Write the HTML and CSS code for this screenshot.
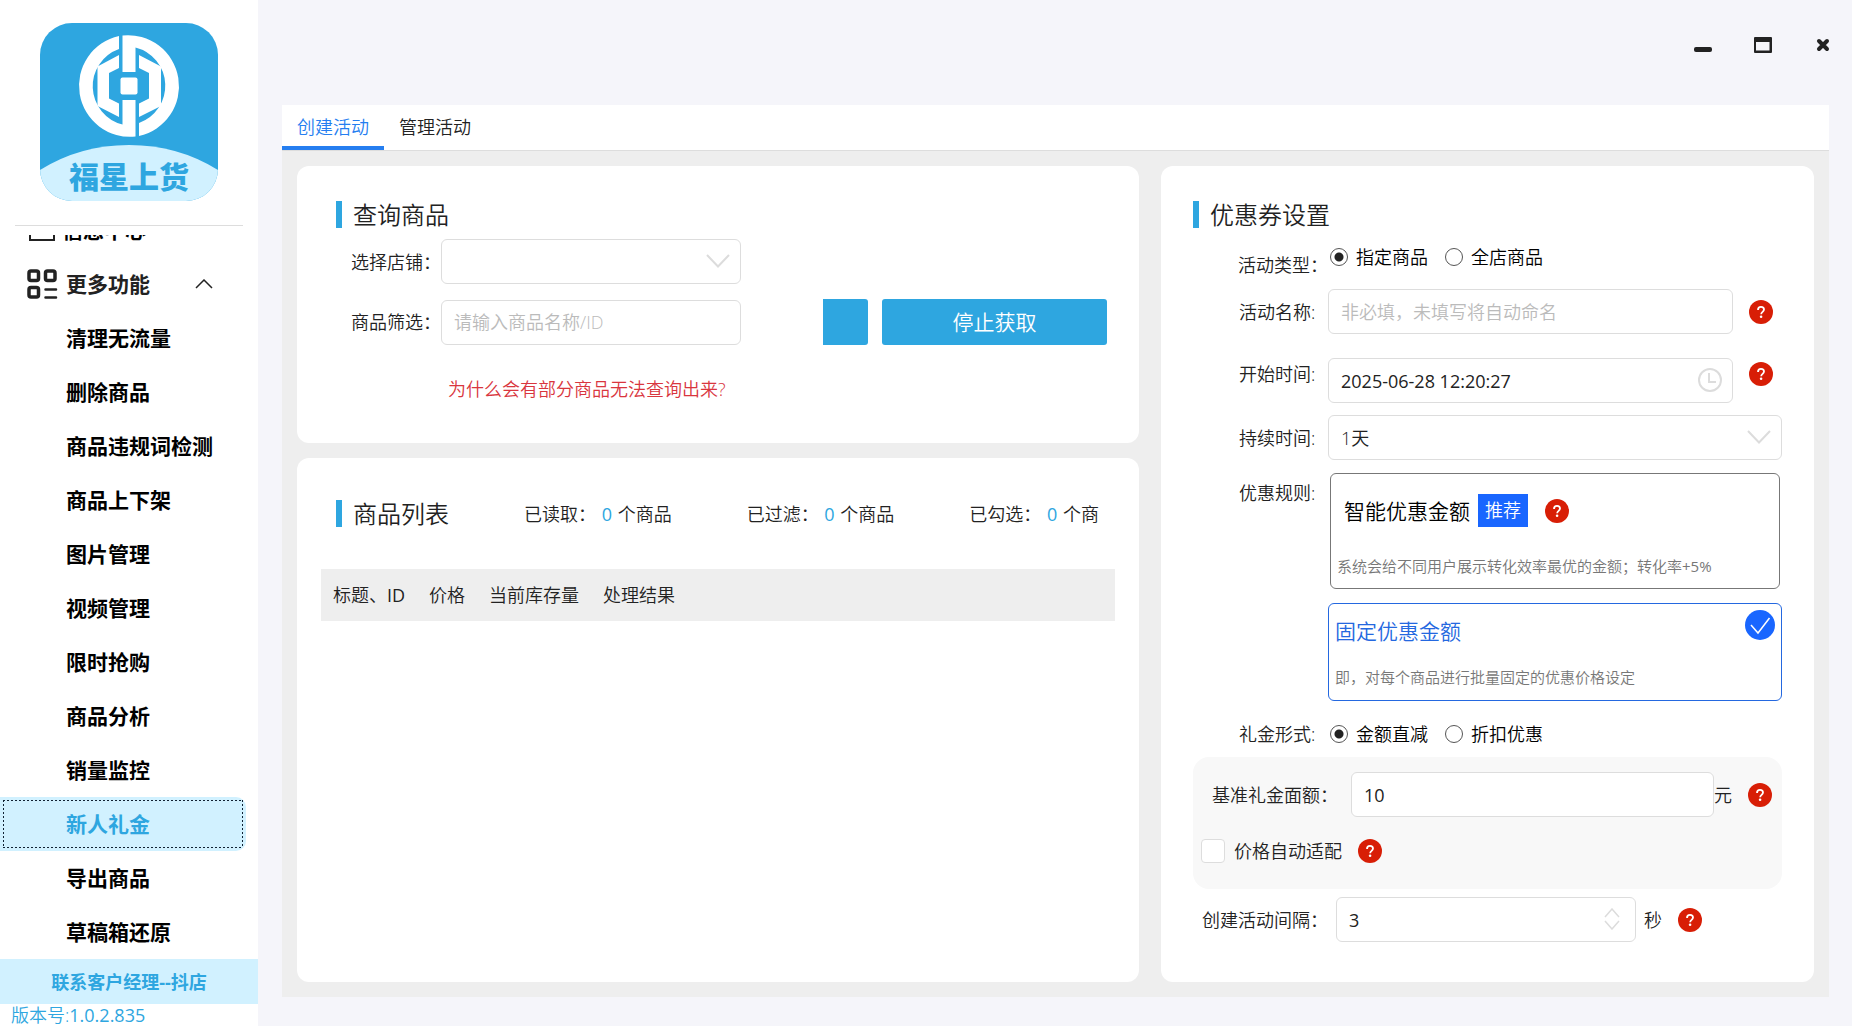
FILE: index.html
```html
<!DOCTYPE html>
<html lang="zh-CN">
<head>
<meta charset="utf-8">
<title>福星上货</title>
<link rel="stylesheet" href="styles.css">
</head>
<body>
<svg class="sprite" aria-hidden="true">
  <symbol id="help" viewBox="0 0 24 24">
    <circle cx="12" cy="12" r="12" fill="#d81e06"/>
    <path d="M9 10C9 7.800 10.300 6.900 12 6.900s3 1 3 2.700c0 2.200-2.800 2.400-2.800 4.600" fill="none" stroke="#fff" stroke-width="1.800"/>
    <circle cx="12.100" cy="16.800" r="1.300" fill="#fff"/>
  </symbol>
  <symbol id="caret" viewBox="0 0 24 14">
    <path d="M1 1l11 11.500L23 1" fill="none" stroke="#dcdcdc" stroke-width="2"/>
  </symbol>
</svg>
<div class="app">
  <aside class="sidebar">
    <div class="brand">
      <svg class="logo" viewBox="0 0 178 178" role="img" aria-label="福星上货">
        <defs><clipPath id="tile"><rect width="178" height="178" rx="32"/></clipPath></defs>
        <g clip-path="url(#tile)">
          <rect width="178" height="178" fill="#2ea6e0"/>
          <path d="M0 147Q40 122 89 122T178 147V178H0z" fill="#d1f1ff"/>
        </g>
        <g fill="#fff">
          <path d="M79 13A51 51 0 0 0 95.500 113.500V77H82.500V101.500A39.500 39.500 0 0 1 79 26z"/>
          <path d="M99 113A51 51 0 0 0 82.500 12.500V49H95.500V24.500A39.500 39.500 0 0 1 99 100z"/>
          <path d="M79 32L57.500 43.500V83L79 94V80.500L69 75.500V50L79 45z"/>
          <path d="M99 32L121 43.500V83L99 94V80.500L109 75.500V50L99 45z"/>
          <rect x="80.500" y="54.500" width="17" height="17" rx="2"/>
        </g>
        <text class="logo-text" x="89" y="165" text-anchor="middle">福星上货</text>
      </svg>
    </div>
    <nav class="menu">
      <a class="menu-group info" href="#">
        <svg class="menu-icon" viewBox="0 0 32 32"><path d="M4 3v23h24V3M10 17h12" fill="none" stroke="#222" stroke-width="2"/></svg>
        <span>信息中心</span>
      </a>
      <a class="menu-group" href="#">
        <svg class="menu-icon" viewBox="0 0 32 32"><g fill="none" stroke="#222" stroke-width="3.500"><rect x="3" y="3" width="9.500" height="9.500" rx="2"/><rect x="19.500" y="3" width="9.500" height="9.500" rx="2"/><rect x="3" y="19.500" width="9.500" height="9.500" rx="2"/></g><path d="M19.500 21.500h10.500M19.500 29.500h10.500" stroke="#222" stroke-width="2.500" stroke-linecap="round"/></svg>
        <span>更多功能</span>
        <svg class="menu-arrow" viewBox="0 0 18 10"><path d="M1 9l8-8 8 8" fill="none" stroke="#222" stroke-width="1.500"/></svg>
      </a>
      <a class="menu-item" href="#">清理无流量</a>
      <a class="menu-item" href="#">删除商品</a>
      <a class="menu-item" href="#">商品违规词检测</a>
      <a class="menu-item" href="#">商品上下架</a>
      <a class="menu-item" href="#">图片管理</a>
      <a class="menu-item" href="#">视频管理</a>
      <a class="menu-item" href="#">限时抢购</a>
      <a class="menu-item" href="#">商品分析</a>
      <a class="menu-item" href="#">销量监控</a>
      <a class="menu-item active" href="#"><span>新人礼金</span></a>
      <a class="menu-item" href="#">导出商品</a>
      <a class="menu-item" href="#">草稿箱还原</a>
    </nav>
    <button class="contact" type="button">联系客户经理--抖店</button>
    <div class="version">版本号:<span>1.0.2.835</span></div>
  </aside>

  <main class="main">
    <header class="titlebar">
      <button type="button" aria-label="最小化"><svg width="20" height="20" viewBox="0 0 20 20"><rect x="1" y="12" width="18" height="5" rx="2" fill="#222"/></svg></button>
      <button type="button" aria-label="最大化"><svg width="20" height="20" viewBox="0 0 20 20"><path fill-rule="evenodd" d="M2 2h16a1 1 0 0 1 1 1v14a1 1 0 0 1-1 1H2a1 1 0 0 1-1-1V3a1 1 0 0 1 1-1zM3 7v8.500h13.500V7z" fill="#222"/></svg></button>
      <button type="button" aria-label="关闭"><svg width="20" height="20" viewBox="0 0 20 20"><path d="M6 6l8 8M14 6l-8 8" stroke="#222" stroke-width="4" stroke-linecap="round"/></svg></button>
    </header>
    <div class="workspace">
      <div class="tabs" role="tablist">
        <button class="tab selected" type="button" role="tab" aria-selected="true">创建活动</button>
        <button class="tab" type="button" role="tab" aria-selected="false">管理活动</button>
      </div>
      <div class="panels">
        <div class="left">
          <section class="card query">
            <h2>查询商品</h2>
            <div class="query-row">
              <label for="shop">选择店铺：</label>
              <div class="control">
                <select id="shop"><option></option></select>
                <svg class="caret" width="24" height="14"><use href="#caret"/></svg>
              </div>
            </div>
            <div class="query-row">
              <label for="filter">商品筛选：</label>
              <div class="control"><input id="filter" type="text" placeholder="请输入商品名称/ID"></div>
              <div class="actions">
                <button class="btn btn-cut" type="button" aria-label="获取"></button>
                <button class="btn btn-stop" type="button">停止获取</button>
              </div>
            </div>
            <a class="why" href="#">为什么会有部分商品无法查询出来?</a>
          </section>
          <section class="card list">
            <div class="list-head">
              <h2>商品列表</h2>
              <div class="stats">
                <span>已读取： <b>0</b> 个商品</span>
                <span>已过滤： <b>0</b> 个商品</span>
                <span>已勾选： <b>0</b> 个商品</span>
              </div>
            </div>
            <table class="goods">
              <thead><tr><th>标题、<span>ID</span></th><th>价格</th><th>当前库存量</th><th>处理结果</th></tr></thead>
            </table>
          </section>
        </div>

        <form class="card coupon">
          <h2>优惠券设置</h2>
          <div class="field type">
            <span class="name">活动类型：</span>
            <div class="radios">
              <label><input type="radio" name="scope" checked>指定商品</label>
              <label><input type="radio" name="scope">全店商品</label>
            </div>
          </div>
          <div class="field title">
            <label class="name" for="title">活动名称:</label>
            <div class="control"><input id="title" type="text" placeholder="非必填，未填写将自动命名"></div>
            <svg class="help"><use href="#help"/></svg>
          </div>
          <div class="field start">
            <label class="name" for="start">开始时间:</label>
            <div class="control">
              <input class="figure" id="start" type="text" value="2025-06-28 12:20:27">
              <svg class="clock" viewBox="0 0 24 24"><circle cx="12" cy="12" r="11" fill="none" stroke="#dcdcdc" stroke-width="2"/><path d="M11 5v9h7" fill="none" stroke="#dcdcdc" stroke-width="2"/></svg>
            </div>
            <svg class="help"><use href="#help"/></svg>
          </div>
          <div class="field duration">
            <label class="name" for="duration">持续时间:</label>
            <div class="control">
              <select id="duration"><option>1天</option></select>
              <svg class="caret" width="24" height="14"><use href="#caret"/></svg>
            </div>
          </div>
          <div class="field rules">
            <span class="name">优惠规则:</span>
            <div class="options">
              <button class="rule smart" type="button">
                <span class="rule-title">智能优惠金额<em>推荐</em><svg class="help"><use href="#help"/></svg></span>
                <small>系统会给不同用户展示转化效率最优的金额；转化率<span>+5%</span></small>
              </button>
              <button class="rule fixed" type="button">
                <span class="rule-title">固定优惠金额</span>
                <small>即，对每个商品进行批量固定的优惠价格设定</small>
                <svg class="tick" viewBox="0 0 30 30"><circle cx="15" cy="15" r="15" fill="#1966ff"/><path d="M6 15l7 8L24.500 8" fill="none" stroke="#fff" stroke-width="1.500"/></svg>
              </button>
            </div>
          </div>
          <div class="field form">
            <span class="name">礼金形式:</span>
            <div class="radios">
              <label><input type="radio" name="kind" checked>金额直减</label>
              <label><input type="radio" name="kind">折扣优惠</label>
            </div>
          </div>
          <div class="amount">
            <div class="amount-row">
              <label for="base">基准礼金面额：</label>
              <div class="control"><input class="figure" id="base" type="text" value="10"></div>
              <span>元</span>
              <svg class="help"><use href="#help"/></svg>
            </div>
            <div class="adapt">
              <label><input type="checkbox">价格自动适配</label>
              <svg class="help"><use href="#help"/></svg>
            </div>
          </div>
          <div class="interval">
            <label for="interval">创建活动间隔：</label>
            <div class="control">
              <input class="figure" id="interval" type="number" value="3">
              <svg class="spin" viewBox="0 0 16 22"><path d="M1 9l7-8 7 8M1 13l7 8 7-8" fill="none" stroke="#dcdcdc" stroke-width="1.500"/></svg>
            </div>
            <span>秒</span>
            <svg class="help"><use href="#help"/></svg>
          </div>
        </form>
      </div>
    </div>
  </main>
</div>
</body>
</html>
```
FILE: styles.css
```css
* {
  box-sizing: border-box;
}

body {
  margin: 0;
  background: #f5f5fa;
  color: #222;
  font: 350 18px/24px "Open Sans", "Noto Sans CJK SC", sans-serif;
}

button,
input,
select {
  font: inherit;
  color: inherit;
}

button {
  padding: 0;
  border: 0;
  background: none;
}

a {
  color: inherit;
  text-decoration: none;
}

.sprite {
  display: none;
}

.app {
  display: flex;
  height: 100vh;
}

/* Sidebar */
.sidebar {
  display: flex;
  flex: none;
  flex-direction: column;
  width: 258px;
  background: #fff;
}

.brand {
  margin: 0 15px 9px;
  padding: 23px 25px 24px;
  border-bottom: 1px solid #ddd;
}

.logo {
  display: block;
  width: 178px;
  height: 178px;
}

.logo-text {
  fill: #2ea6e0;
  font-size: 30px;
  font-weight: 900;
}

.menu {
  display: flex;
  flex: 1;
  flex-direction: column;
  justify-content: flex-end;
  min-height: 0;
  overflow: hidden;
  color: #000;
  font-size: 21px;
  font-weight: 700;
}

.menu-group,
.menu-item {
  display: flex;
  flex: none;
  align-items: center;
  height: 54px;
}

.menu-group {
  gap: 8px;
  padding: 0 45px 0 26px;
  color: #222;
}

.menu-group.info {
  gap: 4px;
  color: #000;
}

.menu-icon {
  width: 32px;
  height: 32px;
}

.menu-arrow {
  width: 18px;
  height: 10px;
  margin-left: auto;
}

.menu-item {
  padding-left: 66px;
}

.menu-item.active {
  margin-right: 12px;
  padding: 3px;
  border-radius: 0 10px 10px 0;
  background: #d1f1ff;
  color: #2ea6e0;
}

/* Focus marks: 2px dots on a 4px pitch along each edge */
.active span {
  flex: 1;
  padding-left: 63px;
  background:
    repeating-linear-gradient(90deg, #123 0 2px, transparent 2px 4px) top / 100% 1px no-repeat,
    repeating-linear-gradient(90deg, #123 0 2px, transparent 2px 4px) bottom / 100% 1px no-repeat,
    repeating-linear-gradient(#123 0 2px, transparent 2px 4px) left / 1px 100% no-repeat,
    repeating-linear-gradient(#123 0 2px, transparent 2px 4px) right / 1px 100% no-repeat;
  line-height: 48px;
}

.contact {
  height: 45px;
  background: #d1f1ff;
  color: #2ea6e0;
  font-weight: 700;
}

.version {
  padding-left: 11px;
  color: #2ea6e0;
  line-height: 22px;
}

/* Window frame */
.main {
  display: flex;
  flex: 1;
  flex-direction: column;
  min-width: 0;
  padding: 0 23px 29px 24px;
}

.titlebar {
  display: flex;
  flex: none;
  justify-content: flex-end;
  gap: 40px;
  height: 105px;
  padding-top: 35px;
  margin-right: -4px;
}

.titlebar button {
  width: 20px;
  height: 20px;
}

.workspace {
  display: flex;
  flex: 1;
  flex-direction: column;
  min-height: 0;
  background: #eee;
}

.tabs {
  display: flex;
  flex: none;
  height: 46px;
  border-bottom: 1px solid #ddd;
  background: #fff;
}

.tab {
  padding: 2px 15px 0;
  border-bottom: 4px solid transparent;
}

.tab.selected {
  border-color: #257ef0;
  color: #257ef0;
}

.panels {
  display: grid;
  flex: 1;
  grid-template-columns: 842fr 653fr;
  gap: 22px;
  padding: 15px;
}

.left {
  display: flex;
  flex-direction: column;
  gap: 15px;
}

.card {
  border-radius: 12px;
  background: #fff;
}

h2 {
  display: flex;
  align-items: center;
  gap: 11px;
  margin: 0;
  font-size: 24px;
  font-weight: 350;
  line-height: 27px;
}

h2::before {
  width: 6px;
  height: 27px;
  background: #2ea6e0;
  content: "";
}

/* Inputs */
.control {
  position: relative;
}

.control input,
.control select {
  display: block;
  width: 100%;
  height: 45px;
  padding: 0 12px;
  border: 1px solid #ddd;
  border-radius: 6px;
  outline: 0;
  background: #fff;
  appearance: none;
}

.control input::placeholder {
  color: #bbb;
  opacity: 1;
}

/* Latin letters and figures take the regular weight beside the lighter Chinese text */
.figure,
.version span,
.goods span,
.rule small span {
  font-weight: 400;
}

input[type="number"]::-webkit-inner-spin-button {
  appearance: none;
}

.caret,
.clock,
.spin {
  position: absolute;
  top: 15px;
  right: 11px;
  pointer-events: none;
}

.clock {
  top: 10px;
  width: 24px;
  height: 24px;
}

.spin {
  top: 11px;
  right: 16px;
  width: 16px;
  height: 22px;
}

.help {
  flex: none;
  width: 24px;
  height: 24px;
}

/* Product query */
.query {
  flex: none;
  height: 277px;
  padding: 35px 32px 0 39px;
}

.query-row {
  display: flex;
  align-items: center;
  margin: 11px 0 15px 15px;
}

.query-row + .query-row {
  margin-top: 0;
}

.query-row .control {
  width: 300px;
}

.actions {
  display: flex;
  gap: 14px;
  margin-left: auto;
}

.btn {
  height: 46px;
  border-radius: 3px;
  background: #2ea6e0;
  color: #fff;
  font-size: 21px;
}

.btn-cut {
  width: 45px;
  border-radius: 0 3px 3px 0;
}

.btn-stop {
  width: 225px;
}

.why {
  display: block;
  margin: 32px 0 0 112px;
  color: #d9363e;
}

/* Product list */
.list {
  flex: 1;
  padding: 42px 24px 0;
}

.list-head {
  display: flex;
  align-items: center;
  padding: 0 15px;
}

.stats {
  display: flex;
  flex: 1;
  gap: 75px;
  min-width: 0;
  margin-left: 75px;
  overflow: hidden;
  white-space: nowrap;
}

.stats b {
  margin: 0 1px;
  color: #2ea6e0;
  font-weight: 400;
}

.goods {
  display: block;
  margin-top: 42px;
  border-spacing: 0;
  background: #eee;
}

.goods th {
  height: 52px;
  padding: 0 12px;
  font-weight: 350;
}

/* Coupon settings */
.coupon {
  padding: 35px 32px 0;
}

.field {
  display: flex;
  align-items: center;
}

.name {
  flex: none;
  width: 135px;
  padding-left: 46px;
  white-space: nowrap;
}

.radios {
  display: flex;
  gap: 15px;
}

.radios label {
  display: flex;
  align-items: center;
  gap: 8px;
  color: #000;
}

.radios input {
  width: 18px;
  height: 18px;
  margin: 0 0 0 2px;
  border: 1px solid #555;
  border-radius: 50%;
  background: #fff;
  appearance: none;
}

.radios input:checked {
  background: radial-gradient(#222 0 4px, #fff 5px);
}

.field .control {
  flex: 1;
}

.field .control + .help {
  margin: 0 9px 0 16px;
}

.type {
  align-items: flex-end;
  height: 49px;
}

.type .name {
  padding-left: 45px;
}

.type .radios {
  margin-bottom: 8px;
}

.title {
  margin-top: 12px;
}

.start {
  align-items: flex-start;
  margin-top: 24px;
}

.start .name {
  padding-top: 4px;
}

.start .help {
  align-self: flex-start;
}

.field.start .control + .help {
  margin-top: 4px;
}

.duration {
  margin-top: 12px;
}

.rules {
  align-items: flex-start;
  margin-top: 13px;
}

.rules .name {
  padding-top: 8px;
}

.options {
  display: flex;
  flex: 1;
  flex-direction: column;
  gap: 14px;
}

.rule {
  position: relative;
  display: flex;
  flex-direction: column;
  justify-content: space-between;
  border: 1px solid #777;
  border-radius: 6px;
  text-align: left;
}

.rule-title {
  display: flex;
  align-items: center;
  color: #000;
  font-size: 21px;
}

.rule small {
  color: #777;
  font-size: 15px;
}

.smart {
  height: 116px;
  margin: 0 2px;
  padding: 20px 6px 10px;
}

.smart .rule-title {
  padding-left: 7px;
}

.rule em {
  margin: 0 17px 0 8px;
  padding: 0 7px;
  background: #1966ff;
  color: #fff;
  font-size: 18px;
  font-style: normal;
  line-height: 33px;
}

.fixed {
  height: 98px;
  padding: 15px 6px 11px;
  border-color: #2468e0;
}

.fixed .rule-title {
  color: #2468e0;
}

.tick {
  position: absolute;
  top: 6px;
  right: 6px;
  width: 30px;
  height: 30px;
}

.form {
  margin-top: 21px;
}

.amount {
  margin-top: 11px;
  padding: 15px 10px 26px 8px;
  border-radius: 16px;
  background: #f8f8f8;
}

.amount-row,
.adapt,
.interval {
  display: flex;
  align-items: center;
}

.amount-row {
  padding-left: 11px;
}

.amount-row label {
  width: 139px;
}

.amount-row .control {
  flex: 1;
}

.amount-row .help {
  margin-left: 16px;
}

.adapt {
  gap: 16px;
  margin-top: 22px;
}

.adapt label {
  display: flex;
  align-items: center;
  gap: 9px;
}

.adapt input {
  width: 24px;
  height: 24px;
  margin: 0;
  border: 1px solid #ddd;
  border-radius: 4px;
  background: #fff;
  appearance: none;
}

.interval {
  margin: 8px 0 0 9px;
}

.interval label {
  width: 134px;
}

.interval .control {
  width: 300px;
}

.interval span {
  margin: 0 16px 0 8px;
}
```
